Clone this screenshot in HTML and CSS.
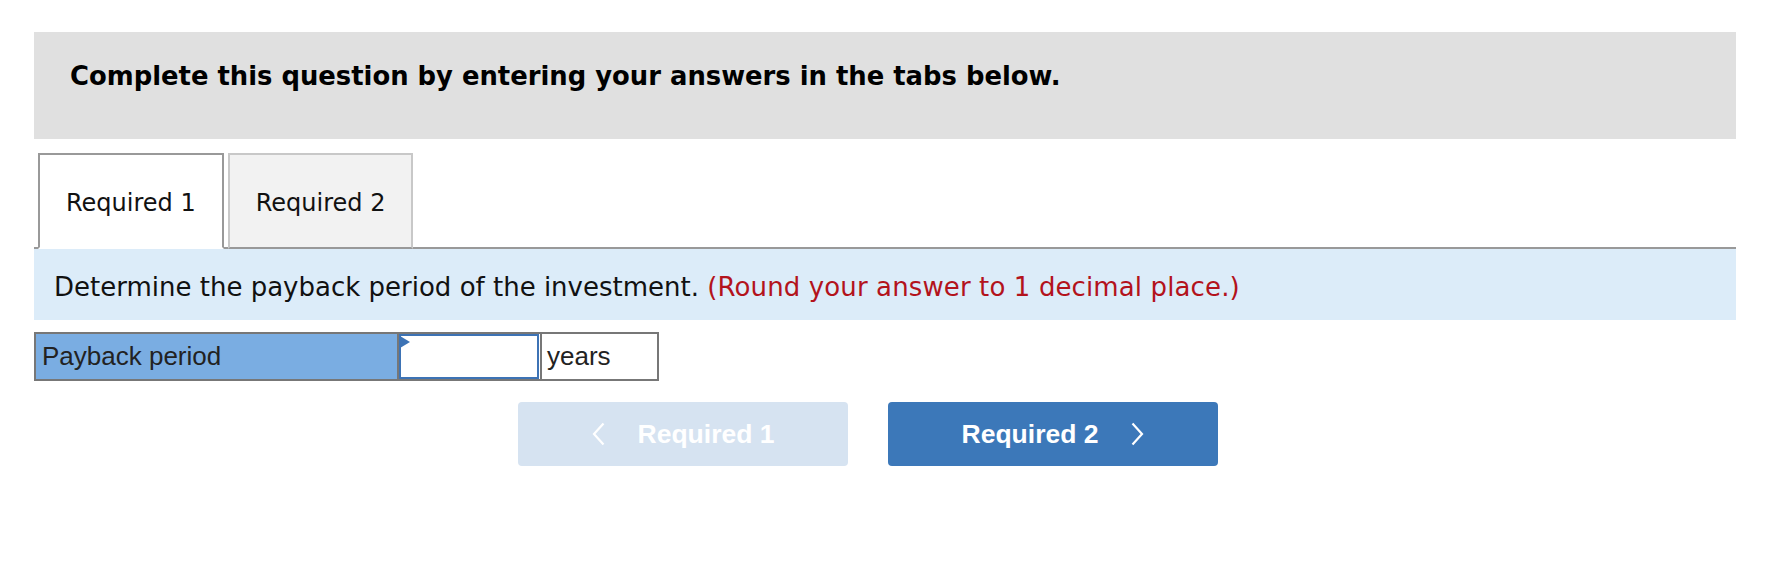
FILE: index.html
```html
<!DOCTYPE html>
<html lang="en">
<head>
<meta charset="utf-8">
<title>Payback period</title>
<link rel="stylesheet" href="styles.css">
</head>
<body>
<div class="page">
  <div class="banner">Complete this question by entering your answers in the tabs below.</div>

  <div class="tabbar">
    <div class="tab tab-active">Required 1</div>
    <div class="tab tab-idle">Required 2</div>
  </div>

  <div class="instruction">Determine the payback period of the investment. <span class="hint">(Round your answer to 1 decimal place.)</span></div>

  <div class="answer-row">
    <div class="label-cell">Payback period</div>
    <div class="input-cell">
      <input class="answer-input" type="text" aria-label="Payback period">
      <span class="flag"></span>
    </div>
    <div class="unit-cell">years</div>
  </div>

  <div class="nav">
    <button class="nav-btn nav-prev" type="button">
      <svg class="chev" width="13" height="24" viewBox="0 0 13 24"><polyline points="11.5,1.5 2,12 11.5,22.5" fill="none" stroke="#ffffff" stroke-width="2.2"/></svg>
      <span>Required 1</span>
    </button>
    <button class="nav-btn nav-next" type="button">
      <span>Required 2</span>
      <svg class="chev" width="13" height="24" viewBox="0 0 13 24"><polyline points="1.5,1.5 11,12 1.5,22.5" fill="none" stroke="#ffffff" stroke-width="2.2"/></svg>
    </button>
  </div>
</div>
</body>
</html>
```

FILE: styles.css
```css
html, body {
  margin: 0;
  padding: 0;
  background: #ffffff;
}

.page {
  margin: 32px 40px 0 34px;
  font-family: "DejaVu Sans", Verdana, sans-serif;
  color: #111111;
}

.banner {
  background: #e0e0e0;
  height: 107px;
  box-sizing: border-box;
  padding: 29px 0 0 36px;
  font-size: 25.85px;
  line-height: 30px;
  font-weight: bold;
  color: #000000;
}

.tabbar {
  display: flex;
  gap: 4px;
  margin-top: 14px;
  padding-left: 4px;
  border-bottom: 2px solid #999999;
}

.tab {
  font-size: 24px;
  line-height: 28px;
  padding: 34px 26px 30px;
  border: 2px solid #999999;
  margin-bottom: -2px;
  color: #111111;
}

.tab-active {
  background: #ffffff;
  border-bottom-color: #ffffff;
}

.tab-idle {
  background: #f2f2f2;
  border-color: #c8c8c8;
  border-bottom-color: #999999;
}

.instruction {
  background: #dcecf9;
  height: 71px;
  box-sizing: border-box;
  padding: 23px 0 0 20px;
  font-size: 26px;
  line-height: 30px;
  color: #111111;
}

.hint {
  color: #b3131c;
  letter-spacing: 0.12px;
}

.answer-row {
  display: flex;
  width: 625px;
  height: 49px;
  box-sizing: border-box;
  margin-top: 12px;
  border: 2px solid #777777;
  font-family: "Liberation Sans", Arial, sans-serif;
  font-size: 26px;
  line-height: 45px;
  color: #222222;
}

.label-cell {
  width: 363px;
  box-sizing: border-box;
  background: #7aade2;
  border-right: 2px solid #777777;
  padding-left: 6px;
}

.input-cell {
  position: relative;
  width: 141px;
  box-sizing: border-box;
  padding-right: 1px;
  background: #ffffff;
}

.answer-input {
  display: block;
  width: 100%;
  height: 100%;
  box-sizing: border-box;
  margin: 0;
  border: 2px solid #3d73b5;
  outline: none;
  background: #ffffff;
  font-family: "Liberation Sans", Arial, sans-serif;
  font-size: 24px;
}

.flag {
  position: absolute;
  left: 1px;
  top: 2px;
  width: 0;
  height: 0;
  border-top: 6px solid transparent;
  border-bottom: 6px solid transparent;
  border-left: 10px solid #3d73b5;
}

.unit-cell {
  flex: 1;
  border-left: 2px solid #777777;
  padding-left: 5px;
  background: #ffffff;
}

.nav {
  display: flex;
  justify-content: center;
  gap: 40px;
  margin-top: 21px;
  padding-right: 34px;
}

.nav-btn {
  width: 330px;
  height: 64px;
  display: flex;
  align-items: center;
  justify-content: center;
  gap: 33px;
  border: none;
  border-radius: 4px;
  font-family: "Liberation Sans", Arial, sans-serif;
  font-size: 26.5px;
  font-weight: bold;
  color: #ffffff;
  padding: 0;
}

.nav-prev {
  background: #d6e3f1;
}

.nav-next {
  background: #3c78b9;
}

.chev {
  display: block;
}
```
